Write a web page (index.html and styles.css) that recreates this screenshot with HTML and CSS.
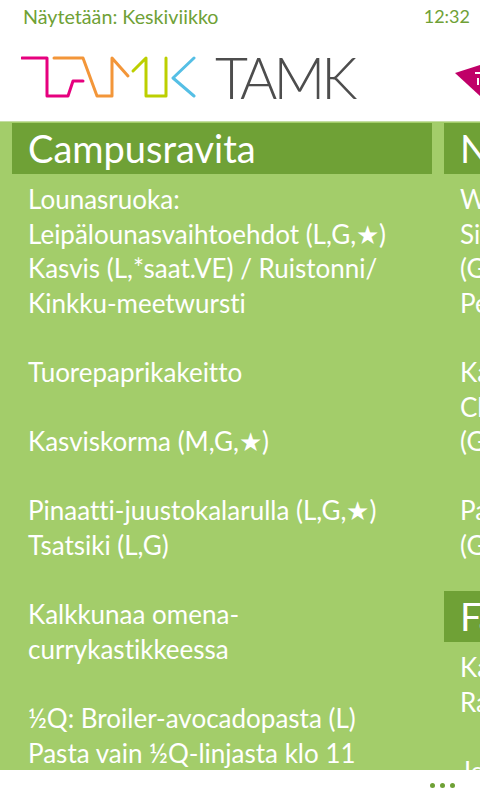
FILE: index.html
```html
<!DOCTYPE html>
<html lang="fi">
<head>
    <meta charset="UTF-8">
    <meta name="viewport" content="width=device-width, initial-scale=1.0">
    <title>TAMK</title>
    <link rel="stylesheet" href="styles.css">
</head>
<body>
    <div class="status">
        <span>Näytetään: Keskiviikko</span>
        <span class="clock">12:32</span>
    </div>

    <div class="logo-row">
        <svg class="logo" width="175" height="44" viewBox="0 0 175 44" fill="none" stroke-width="3" stroke-linecap="round" stroke-linejoin="round">
            <path stroke="#e6007e" d="M1 3H26V41H47L52 26H62"/>
            <path stroke="#f39639" d="M33 3H62L76 41H91V3L107 21"/>
            <path stroke="#bccf00" d="M112 16L125 3V41H145V3"/>
            <path stroke="#55bfe5" d="M173 3L152 23L173 41"/>
        </svg>
        <span class="logo-text">TAMK</span>
        <svg class="next-logo" width="25" height="31" viewBox="0 0 25 31">
            <path fill="#c00068" d="M0 8L25 0V31Z"/>
            <path fill="none" stroke="#fff" stroke-width="2" d="M20 8H25M23 13V20"/>
        </svg>
    </div>

    <div class="menu">
        <div class="column">
            <h2 class="title">Campusravita</h2>
            <p>Lounasruoka:<br>Leipälounasvaihtoehdot (L,G,★)<br>Kasvis (L,*saat.VE) / Ruistonni/<br>Kinkku-meetwursti</p>
            <p>Tuorepaprikakeitto</p>
            <p>Kasviskorma (M,G,★)</p>
            <p>Pinaatti-juustokalarulla (L,G,★)<br>Tsatsiki (L,G)</p>
            <p>Kalkkunaa omena-<br>currykastikkeessa</p>
            <p>½Q: Broiler-avocadopasta (L)<br>Pasta vain ½Q-linjasta klo 11</p>
        </div>
        <div class="column">
            <h2 class="title">Ni</h2>
            <p>W<br>Si<br>(G<br>Pe</p>
            <p>Ka<br>Cl<br>(G</p>
            <p>Pa<br>(G</p>
            <h2 class="title">Fa</h2>
            <p>Ka<br>Ra</p>
            <p>Je</p>
        </div>
    </div>

    <div class="app-bar">
        <i></i><i></i><i></i>
    </div>
</body>
</html>
```

FILE: styles.css
```css
html, body {
    height: 100%;
}

body {
    margin: 0;
    width: 480px;
    height: 800px;
    overflow: hidden;
    display: flex;
    flex-direction: column;
    background-color: #fff;
    font-family: Lato, sans-serif;
    font-variant-ligatures: none;
}

.status {
    height: 32px;
    padding: 0 10px 1px 23px;
    display: flex;
    justify-content: space-between;
    align-items: center;
    color: #6fa136;
    font-size: 19.7px;
}

.clock {
    font-size: 18px;
}

.logo-row {
    height: 88px;
    padding-left: 21px;
    display: flex;
    align-items: center;
    overflow: hidden;
}

.logo {
    flex: none;
}

.logo-text {
    margin-left: 19px;
    font-size: 57px;
    font-weight: 300;
    letter-spacing: -4px;
    color: #4d4d4d;
    line-height: 1;
}

.next-logo {
    flex: none;
    margin-left: auto;
    margin-top: 7px;
}

.menu {
    flex: 1;
    min-height: 0;
    overflow: hidden;
    padding-top: 1px;
    display: flex;
    gap: 12px;
    padding-left: 12px;
    background-color: #a3cd6a;
    border-top: 1px solid #c5dea3;
}

.column {
    flex: none;
    width: 420px;
    color: #fff;
    font-size: 26px;
    line-height: 34.6px;
}

.title {
    margin: 0 0 8px;
    height: 51px;
    padding-left: 16px;
    background-color: #6fa136;
    font-size: 38px;
    font-weight: 400;
    line-height: 51px;
}

.column p {
    margin: 0 0 34.6px;
    padding-left: 16px;
}

.column p + .title {
    margin-top: -6px;
}

.app-bar {
    flex: none;
    height: 30px;
    padding-right: 25px;
    display: flex;
    justify-content: flex-end;
    align-items: center;
    gap: 5px;
    background-color: #fff;
}

.app-bar i {
    width: 5px;
    height: 5px;
    border-radius: 50%;
    background-color: #6fa136;
}
```
